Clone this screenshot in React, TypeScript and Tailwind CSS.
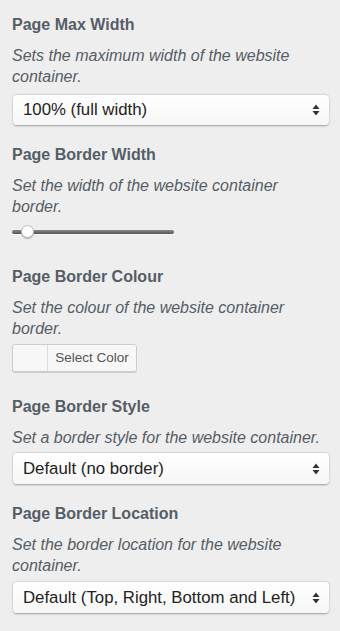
const font = { fontFamily: '"Liberation Sans", Arial, sans-serif' };

function Heading({ children }: { children: React.ReactNode }) {
  return <h3 className="text-[16px] font-bold leading-[20px] text-[#555d66]">{children}</h3>;
}

function Desc({ children }: { children: React.ReactNode }) {
  return <p className="mt-[10px] mr-[2px] text-[16px] italic leading-[21px] text-[#555d66]">{children}</p>;
}

function Chevrons() {
  return (
    <svg width="8" height="12" viewBox="0 0 8 12" className="shrink-0">
      <path d="M4 0.5 L7.5 5 L0.5 5 Z" fill="#333" />
      <path d="M4 11.5 L7.5 7 L0.5 7 Z" fill="#333" />
    </svg>
  );
}

function Select({ value, className }: { value: string; className?: string }) {
  return (
    <div
      className={
        "ml-px w-[316px] flex items-center justify-between pl-[10px] pr-[9px] rounded-[4px] bg-gradient-to-b from-white to-[#f6f6f6] shadow-[0_0.5px_2px_rgba(0,0,0,0.35)] text-[16.8px] text-[#222] " +
        (className ?? "")
      }
    >
      <span>{value}</span>
      <Chevrons />
    </div>
  );
}

export default function App() {
  return (
    <div className="min-h-[631px] w-[340px] overflow-hidden bg-[#eeeeee] px-3 pt-[15px]" style={font}>
      {/* Max width */}
      <Heading>Page Max Width</Heading>
      <Desc>Sets the maximum width of the website container.</Desc>
      <Select value="100% (full width)" className="mt-[8px] h-[30px]" />

      {/* Border width */}
      <div className="mt-[20px]">
        <Heading>Page Border Width</Heading>
        <Desc>Set the width of the website container border.</Desc>
        <div className="relative mt-[8px] h-[14px] w-[162px] flex items-center">
          <div className="h-[4px] w-full rounded-full bg-gradient-to-b from-[#8a8a8a] to-[#555] shadow-[0_1px_0_rgba(255,255,255,0.6)]" />
          <div className="absolute left-[9px] top-[0px] h-[13px] w-[13px] rounded-full bg-white border border-[#bbb] shadow-[0_1px_1px_rgba(0,0,0,0.25)]" />
        </div>
      </div>

      {/* Border colour */}
      <div className="mt-[28px]">
        <Heading>Page Border Colour</Heading>
        <Desc>Set the colour of the website container border.</Desc>
        <div className="mt-[5px] flex h-[28px] w-[125px] rounded-[3px] border border-[#cccccc] bg-[#f7f7f7] shadow-[0_1px_0_#ccc] overflow-hidden">
          <div className="w-[35px] h-full bg-[#f7f7f7] border-r border-[#ddd]" />
          <div className="flex-1 flex items-center justify-center text-[13.5px] text-[#555] bg-[#f7f7f7]">Select Color</div>
        </div>
      </div>

      {/* Border style */}
      <div className="mt-[25px]">
        <Heading>Page Border Style</Heading>
        <Desc>Set a border style for the website container.</Desc>
        <Select value="Default (no border)" className="mt-[5px] h-[31px]" />
      </div>

      {/* Border location */}
      <div className="mt-[20px]">
        <Heading>Page Border Location</Heading>
        <Desc>Set the border location for the website container.</Desc>
        <Select value="Default (Top, Right, Bottom and Left)" className="mt-[6px] h-[31px]" />
      </div>
    </div>
  );
}
